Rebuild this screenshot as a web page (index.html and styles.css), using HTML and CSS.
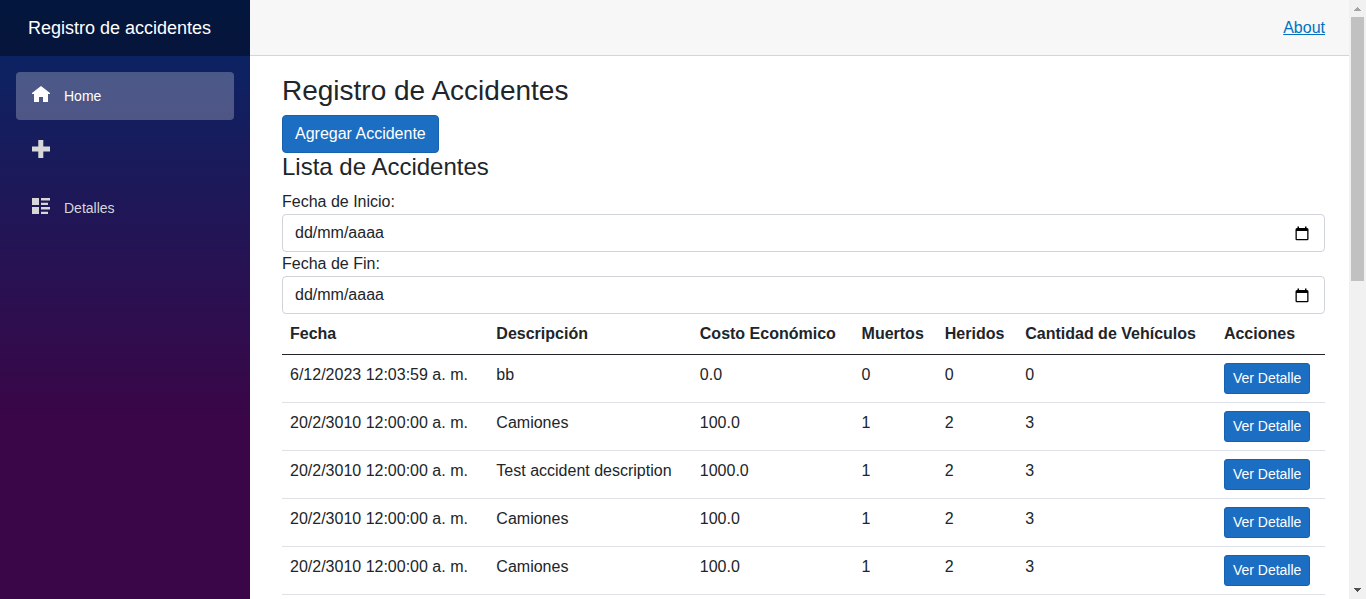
FILE: index.html
```html
<!DOCTYPE html>
<html lang="es">
<head>
<meta charset="utf-8">
<title>Registro de accidentes</title>
<link rel="stylesheet" href="styles.css">
</head>
<body>
<div class="page">
  <aside class="sidebar">
    <div class="brand-row"><a class="brand" href="#">Registro de accidentes</a></div>
    <nav class="nav">
      <a class="nav-link active" href="#">
        <svg class="nav-icon" viewBox="0 0 18 18" aria-hidden="true"><path d="M9 1 0 8v1h2v8h5v-5h4v5h5V9h2V8z"/></svg>
        Home
      </a>
      <a class="nav-link" href="#" aria-label="Agregar">
        <svg class="nav-icon" viewBox="0 0 18 18" aria-hidden="true"><path d="M6.3-1h5v6.5H18v5h-6.7V17h-5v-6.5H0v-5h6.3z"/></svg>
      </a>
      <a class="nav-link" href="#">
        <svg class="nav-icon" viewBox="0 0 18 18" aria-hidden="true"><path d="M0 1h7v7H0zM9 1h9v2.5H9zM9 5.8h7V8H9zM0 10h7v7H0zM9 10h9v2.5H9zM9 14.8h7V17H9z"/></svg>
        Detalles
      </a>
    </nav>
  </aside>
  <main class="main">
    <div class="top-row"><a class="about" href="#">About</a></div>
    <article class="content">
      <h1 class="title">Registro de Accidentes</h1>
      <button class="btn" type="button">Agregar Accidente</button>
      <h2 class="subtitle">Lista de Accidentes</h2>
      <label class="label" for="inicio">Fecha de Inicio:</label>
      <div class="date-field">
        <input class="date-input" id="inicio" type="text" placeholder="dd/mm/aaaa">
        <button class="picker" type="button" aria-label="Elegir fecha de inicio"><svg class="picker-icon" viewBox="0 0 14 15" aria-hidden="true"><path d="M2.5.5H4V2h6V.5h1.500V2H12q1.500 0 1.500 1.500v9.500q0 1.300-1.300 1.300H1.800Q.5 14.300.5 13V3.500Q.5 2 2 2h.5zM1.800 5v8h10.400V5z" fill-rule="evenodd"/></svg></button>
      </div>
      <label class="label" for="fin">Fecha de Fin:</label>
      <div class="date-field">
        <input class="date-input" id="fin" type="text" placeholder="dd/mm/aaaa">
        <button class="picker" type="button" aria-label="Elegir fecha de fin"><svg class="picker-icon" viewBox="0 0 14 15" aria-hidden="true"><path d="M2.5.5H4V2h6V.5h1.500V2H12q1.500 0 1.500 1.500v9.500q0 1.300-1.300 1.300H1.800Q.5 14.300.5 13V3.500Q.5 2 2 2h.5zM1.800 5v8h10.400V5z" fill-rule="evenodd"/></svg></button>
      </div>
      <table class="table">
        <thead>
          <tr><th>Fecha</th><th>Descripción</th><th>Costo Económico</th><th>Muertos</th><th>Heridos</th><th>Cantidad de Vehículos</th><th>Acciones</th></tr>
        </thead>
        <tbody>
          <tr><td>6/12/2023 12:03:59 a. m.</td><td>bb</td><td>0.0</td><td>0</td><td>0</td><td>0</td><td><button class="btn btn-sm" type="button">Ver Detalle</button></td></tr>
          <tr><td>20/2/3010 12:00:00 a. m.</td><td>Camiones</td><td>100.0</td><td>1</td><td>2</td><td>3</td><td><button class="btn btn-sm" type="button">Ver Detalle</button></td></tr>
          <tr><td>20/2/3010 12:00:00 a. m.</td><td>Test accident description</td><td>1000.0</td><td>1</td><td>2</td><td>3</td><td><button class="btn btn-sm" type="button">Ver Detalle</button></td></tr>
          <tr><td>20/2/3010 12:00:00 a. m.</td><td>Camiones</td><td>100.0</td><td>1</td><td>2</td><td>3</td><td><button class="btn btn-sm" type="button">Ver Detalle</button></td></tr>
          <tr><td>20/2/3010 12:00:00 a. m.</td><td>Camiones</td><td>100.0</td><td>1</td><td>2</td><td>3</td><td><button class="btn btn-sm" type="button">Ver Detalle</button></td></tr>
        </tbody>
      </table>
    </article>
  </main>
  <div class="scrollbar" aria-hidden="true">
    <svg class="arrow arrow-up" viewBox="0 0 17 17"><path d="M5 11h7v-1h-1V9h-1V8H9V7H8v1H7v1H6v1H5z"/></svg>
    <div class="track"><div class="thumb"></div></div>
    <svg class="arrow arrow-down" viewBox="0 0 17 17"><path d="M5 6h7v1h-1v1h-1v1H9v1H8V9H7V8H6V7H5z"/></svg>
  </div>
</div>
</body>
</html>
```
FILE: styles.css
```css
*, *::before, *::after { box-sizing: border-box; }

body {
  margin: 0;
  font-family: "Liberation Sans", Arial, sans-serif;
  font-size: 16px;
  line-height: 24px;
  color: #212529;
  background: #fff;
}

.page { display: flex; height: 100vh; overflow: hidden; }

.sidebar {
  flex: 0 0 250px;
  background: linear-gradient(180deg, #052767 0%, #3a0647 70%);
}

.brand-row {
  display: flex;
  align-items: center;
  height: 56px;
  padding-left: 28px;
  background: rgba(0, 0, 0, 0.4);
}

.brand { color: #fff; font-size: 18px; text-decoration: none; }

.nav { display: flex; flex-direction: column; gap: 8px; padding: 16px; }

.nav-link {
  display: flex;
  align-items: center;
  gap: 14px;
  height: 48px;
  padding: 0 16px;
  border-radius: 4px;
  color: #d7d7d7;
  font-size: 14px;
  text-decoration: none;
}

.nav-link.active { background: rgba(255, 255, 255, 0.25); color: #fff; }

.nav-icon {
  width: 18px;
  height: 18px;
  margin-bottom: 4px;
  fill: currentColor;
  overflow: visible;
}

.main { flex: 1; min-width: 0; overflow: hidden; }

.top-row {
  display: flex;
  align-items: center;
  justify-content: flex-end;
  height: 56px;
  padding: 0 24px 0 32px;
  background: #f7f7f7;
  border-bottom: 1px solid #d6d5d5;
}

.about { color: #0071c1; }

.content { padding: 18px 24px 0 32px; }

.title { margin: 0 0 8px; font-size: 28px; font-weight: 400; line-height: 33px; }

.subtitle { margin: 0 0 10px; font-size: 24px; font-weight: 400; line-height: 27px; }

.btn {
  display: block;
  padding: 6px 12px;
  border: 1px solid #1861ac;
  border-radius: 4px;
  background: #1b6ec2;
  color: #fff;
  font: inherit;
  white-space: nowrap;
}

.btn-sm { padding: 4px 8px; border-radius: 3px; font-size: 14px; line-height: 21px; }

.label { display: block; }

.date-field {
  display: flex;
  align-items: center;
  height: 38px;
  padding: 0 12px;
  border: 1px solid #ced4da;
  border-radius: 4px;
}

.date-input {
  flex: 1;
  min-width: 0;
  padding: 0;
  border: 0;
  outline: 0;
  background: transparent;
  color: #212529;
  font: inherit;
}

.date-input::placeholder { color: #212529; opacity: 1; }

.picker { display: flex; padding: 0 3px; border: 0; background: transparent; }

.picker-icon { width: 14px; height: 15px; }

.table { width: 100%; border-collapse: collapse; }

.table th, .table td {
  padding: 8px;
  border-bottom: 1px solid #dee2e6;
  text-align: left;
  vertical-align: top;
  white-space: nowrap;
}

.table thead th { border-bottom-color: #212529; }

.scrollbar { display: flex; flex-direction: column; flex: 0 0 17px; background: #f1f1f1; }

.arrow { width: 17px; height: 17px; }
.arrow-up { fill: #a3a3a3; }
.arrow-down { fill: #505050; }

.track { flex: 1; padding: 0 2px 0 2px; }

.thumb { height: 264px; max-height: 100%; background: #c1c1c1; }
```
